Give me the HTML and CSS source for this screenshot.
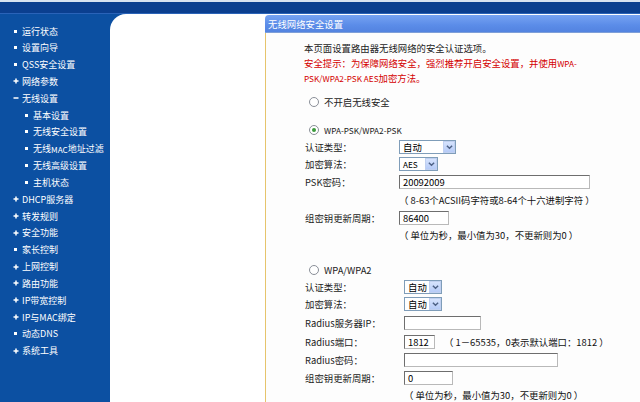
FILE: index.html
```html
<!DOCTYPE html>
<html lang="zh-CN">
<head>
<meta charset="utf-8">
<title>无线网络安全设置</title>
<link rel="stylesheet" href="styles.css">
</head>
<body>
<div class="top"></div>
<div class="main">
  <nav class="side">
    <ul class="menu">
      <li><span class="dot"></span>运行状态</li>
      <li><span class="dot"></span>设置向导</li>
      <li><span class="dot"></span>QSS安全设置</li>
      <li><svg class="pm" viewBox="0 0 6 6"><path d="M3 0.5v5M0.5 3h5"/></svg>网络参数</li>
      <li><svg class="pm" viewBox="0 0 6 6"><path d="M0.5 3h5"/></svg>无线设置</li>
      <li class="sub"><span class="dot"></span>基本设置</li>
      <li class="sub"><span class="dot"></span>无线安全设置</li>
      <li class="sub"><span class="dot"></span>无线<span class="lt">MAC</span>地址过滤</li>
      <li class="sub"><span class="dot"></span>无线高级设置</li>
      <li class="sub"><span class="dot"></span>主机状态</li>
      <li><svg class="pm" viewBox="0 0 6 6"><path d="M3 0.5v5M0.5 3h5"/></svg>DHCP服务器</li>
      <li><svg class="pm" viewBox="0 0 6 6"><path d="M3 0.5v5M0.5 3h5"/></svg>转发规则</li>
      <li><svg class="pm" viewBox="0 0 6 6"><path d="M3 0.5v5M0.5 3h5"/></svg>安全功能</li>
      <li><span class="dot"></span>家长控制</li>
      <li><svg class="pm" viewBox="0 0 6 6"><path d="M3 0.5v5M0.5 3h5"/></svg>上网控制</li>
      <li><svg class="pm" viewBox="0 0 6 6"><path d="M3 0.5v5M0.5 3h5"/></svg>路由功能</li>
      <li><svg class="pm" viewBox="0 0 6 6"><path d="M3 0.5v5M0.5 3h5"/></svg>IP带宽控制</li>
      <li><svg class="pm" viewBox="0 0 6 6"><path d="M3 0.5v5M0.5 3h5"/></svg>IP与MAC绑定</li>
      <li><span class="dot"></span>动态DNS</li>
      <li><svg class="pm" viewBox="0 0 6 6"><path d="M3 0.5v5M0.5 3h5"/></svg>系统工具</li>
    </ul>
  </nav>
  <div class="frame">
    <section class="box">
      <div class="box-head">无线网络安全设置</div>
      <div class="box-body">
        <p class="intro">本页面设置路由器无线网络的安全认证选项。<br><span class="warn">安全提示：为保障网络安全，强烈推荐开启安全设置，并使用<span class="lt">WPA-</span><br><span class="lt">PSK/WPA2-PSK AES</span>加密方法。</span></p>

        <div class="radio-row h16 mt8"><span class="radio"></span>不开启无线安全</div>

        <div class="radio-row h17 mt11"><span class="radio on"></span><span class="lt">WPA-PSK/WPA2-PSK</span></div>
        <div class="row h17"><span class="lbl">认证类型：</span><span class="sel w57"><span class="val">自动</span><span class="arr"><svg viewBox="0 0 8 6"><path d="M1 1.5l3 3 3-3"/></svg></span></span></div>
        <div class="row h17"><span class="lbl">加密算法：</span><span class="sel w39"><span class="val lt">AES</span><span class="arr"><svg viewBox="0 0 8 6"><path d="M1 1.5l3 3 3-3"/></svg></span></span></div>
        <div class="row h19"><span class="lbl">PSK密码：</span><span class="inp w191">20092009</span></div>
        <div class="row h18"><span class="lbl"></span><span class="hint">（ 8-63个ACSII码字符或8-64个十六进制字符 ）</span></div>
        <div class="row h17"><span class="lbl">组密钥更新周期：</span><span class="inp w50">86400</span></div>
        <div class="row h18"><span class="lbl"></span><span class="hint">（ 单位为秒，最小值为30，不更新则为0 ）</span></div>

        <div class="radio-row h17 mt17"><span class="radio"></span>WPA/WPA2</div>
        <div class="row two h17"><span class="lbl">认证类型：</span><span class="sel w38"><span class="val">自动</span><span class="arr"><svg viewBox="0 0 8 6"><path d="M1 1.5l3 3 3-3"/></svg></span></span></div>
        <div class="row two h18"><span class="lbl">加密算法：</span><span class="sel w38"><span class="val">自动</span><span class="arr"><svg viewBox="0 0 8 6"><path d="M1 1.5l3 3 3-3"/></svg></span></span></div>
        <div class="row two h19"><span class="lbl">Radius服务器IP：</span><span class="inp w77"></span></div>
        <div class="row two h19"><span class="lbl">Radius端口：</span><span class="ctl"><span class="inp w31">1812</span><span class="hint side-hint">（ 1－65535，0表示默认端口：1812 ）</span></span></div>
        <div class="row two h18"><span class="lbl">Radius密码：</span><span class="inp w154"></span></div>
        <div class="row two h17"><span class="lbl">组密钥更新周期：</span><span class="inp w49">0</span></div>
        <div class="row two h17"><span class="lbl"></span><span class="hint">（ 单位为秒，最小值为30，不更新则为0 ）</span></div>
      </div>
    </section>
  </div>
</div>
</body>
</html>
```
FILE: styles.css
```css
* { box-sizing: border-box; }
html, body { margin: 0; padding: 0; }
body {
  width: 640px;
  height: 402px;
  overflow: hidden;
  font-family: "Noto Sans CJK SC", "Noto Sans", sans-serif;
  font-size: 9.4px;
  color: #222;
  background: #0c50a2;
}
.top {
  height: 14px;
  background: #0b3f8f;
  border-top: 2px solid #d8e2f0;
  border-bottom: 1px solid #2a63b8;
}
.main {
  display: flex;
  height: 388px;
  background: #0c50a2;
}
.side {
  width: 110px;
  flex: none;
  color: #fff;
}
.menu {
  list-style: none;
  margin: 0;
  padding: 8.6px 0 0 0;
}
.menu li {
  height: 16.84px;
  display: flex;
  align-items: center;
  padding-left: 13px;
  font-size: 9px;
  white-space: nowrap;
}
.menu li.sub { padding-left: 24px; }
.dot {
  width: 3px;
  height: 3px;
  background: #fff;
  margin: 0 5px 0 1px;
  flex: none;
}
.pm {
  width: 6px;
  height: 6px;
  margin-right: 3px;
  flex: none;
  fill: none;
  stroke: #fff;
  stroke-width: 1.5;
}
.lt { font-size: 8.2px; }
.frame {
  flex: 1;
  background: #fff;
  border-top-left-radius: 16px;
  display: flex;
  padding-top: 1px;
  padding-left: 155px;
}
.box {
  flex: 1;
  display: flex;
  flex-direction: column;
}
.box-head {
  height: 18px;
  line-height: 18px;
  background: linear-gradient(#76a3f2, #5b8ce8 60%, #5383e0);
  border-top-left-radius: 4px;
  border-bottom: 1px solid #7e9fd8;
  color: #fff;
  padding-left: 3px;
  white-space: nowrap;
}
.box-body {
  flex: 1;
  border-left: 1px solid #e6c46c;
  background: #fdfdfd;
  padding: 8px 0 0 38px;
}
.intro {
  margin: 0;
  line-height: 15px;
  white-space: nowrap;
}
.warn { color: #d40000; }
.radio-row {
  display: flex;
  align-items: center;
  padding-left: 5px;
  white-space: nowrap;
}
.radio {
  width: 10px;
  height: 10px;
  border-radius: 50%;
  border: 1px solid #8a8f98;
  background: #fff;
  margin-right: 5px;
  display: flex;
  align-items: center;
  justify-content: center;
  flex: none;
}
.radio.on::after {
  content: "";
  width: 4px;
  height: 4px;
  border-radius: 50%;
  background: #3a9a3a;
}
.mt8 { margin-top: 8px; }
.mt11 { margin-top: 11px; }
.mt17 { margin-top: 17px; }
.h16 { height: 16px; }
.h17 { height: 17px; }
.h18 { height: 18px; }
.h19 { height: 19px; }
.row {
  display: grid;
  grid-template-columns: 95px auto;
  align-items: center;
  white-space: nowrap;
}
.row.two { grid-template-columns: 100px auto; }
.lbl { padding-left: 1px; }
.ctl { display: flex; align-items: center; }
.sel {
  height: 14px;
  border: 1px solid #7f9db9;
  background: #fff;
  display: flex;
  align-items: center;
  justify-content: space-between;
  padding-left: 3px;
  color: #000;
}
.arr {
  width: 12px;
  height: 12px;
  background: linear-gradient(#d6e3fd, #b6cbf7);
  border: 1px solid #c0d0f0;
  display: flex;
  align-items: center;
  justify-content: center;
}
.arr svg {
  width: 7px;
  height: 6px;
  fill: none;
  stroke: #4d6185;
  stroke-width: 1.6;
}
.inp {
  height: 14px;
  border: 1px solid #6e6e6e;
  border-right-color: #b9b9b9;
  border-bottom-color: #b9b9b9;
  background: #fff;
  padding-left: 3px;
  line-height: 12px;
  color: #000;
  display: block;
}
.w57 { width: 57px; }
.w39 { width: 39px; }
.w38 { width: 38px; }
.w191 { width: 191px; }
.w50 { width: 50px; }
.w77 { width: 77px; }
.w31 { width: 31px; }
.w154 { width: 154px; }
.w49 { width: 49px; }
.hint { color: #111; }
.side-hint { margin-left: 9px; }
```
